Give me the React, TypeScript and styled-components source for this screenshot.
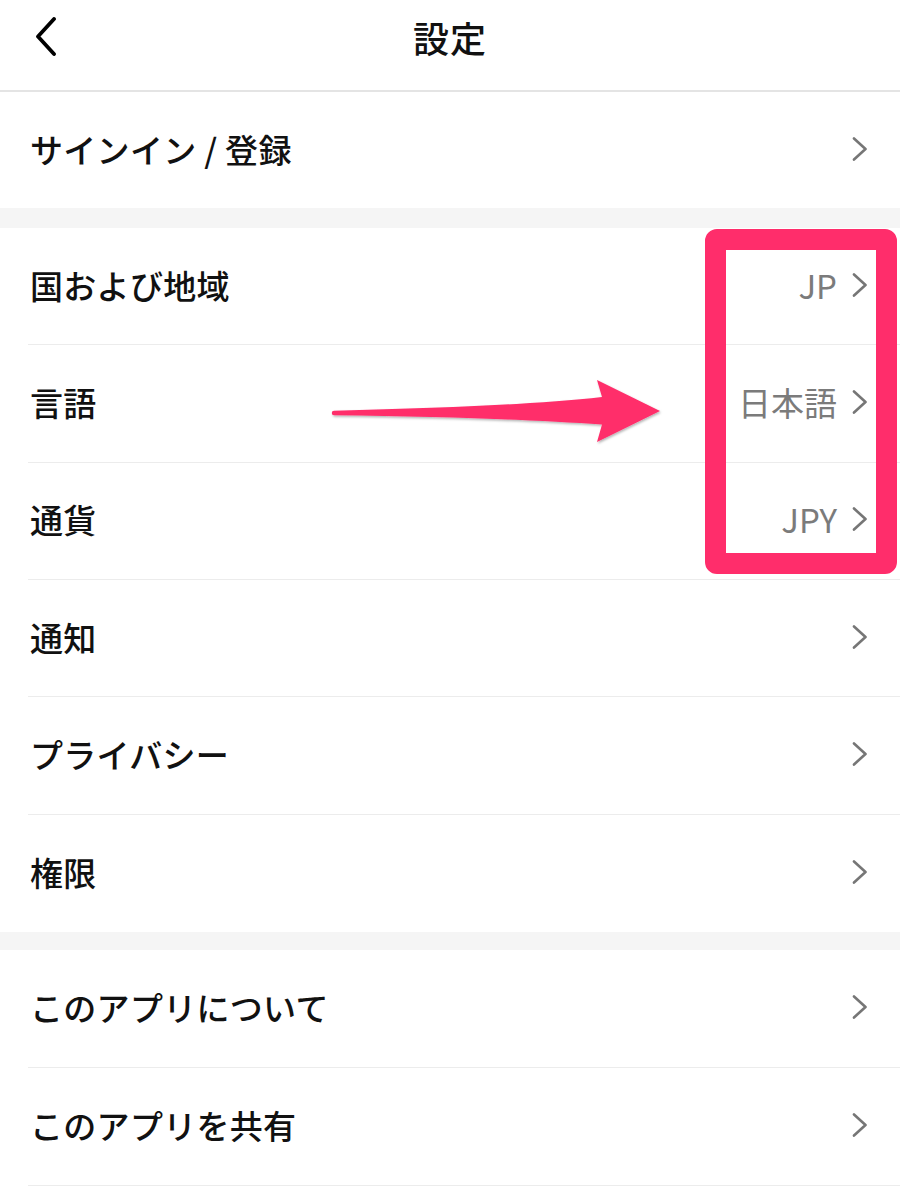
import React from 'react'
import styled, {createGlobalStyle} from 'styled-components'

const colors = {
  pink: '#FF2D6B',
  text: '#111111',
  value: '#7b7b7b',
  chevron: '#767676',
  divider: '#ececec',
  gap: '#f5f5f5',
}

const GlobalStyle = createGlobalStyle`
  html, body {
    margin: 0;
    padding: 0;
    background: #ffffff;
  }
  body {
    font-family: "Noto Sans CJK JP", "Noto Sans", sans-serif;
    color: ${colors.text};
  }
`

const Page = styled.div`
  position: relative;
  width: 900px;
  min-height: 1187px;
  background: #ffffff;
  overflow: hidden;
`

const Header = styled.header`
  display: grid;
  grid-template-columns: 1fr auto 1fr;
  align-items: center;
  height: 92px;
  box-sizing: border-box;
  border-bottom: 2px solid #e4e4e4;
`

const BackButton = styled.button`
  justify-self: start;
  display: flex;
  align-items: center;
  margin: 0 0 16px 34px;
  padding: 0;
  border: none;
  background: none;
`

const Title = styled.h1`
  margin: 0 0 16px;
  font-size: 36px;
  font-weight: 500;
  letter-spacing: 1px;
`

const Section = styled.section`
  display: flex;
  flex-direction: column;
`

const Gap = styled.div<{$h: number}>`
  height: ${_ => _.$h}px;
  background: ${colors.gap};
`

const Row = styled.div<{$h: number; $line: boolean}>`
  display: flex;
  align-items: center;
  height: ${_ => _.$h}px;
  box-sizing: border-box;
  margin-left: 28px;
  padding: 0 32px 3px 2px;
  border-bottom: ${_ => (_.$line ? `1.5px solid ${colors.divider}` : 'none')};
`

const Label = styled.span`
  flex: 1;
  font-size: 33px;
  font-weight: 500;
  letter-spacing: 0.3px;
`

const Value = styled.span`
  margin-right: 15px;
  font-size: 33px;
  font-weight: 400;
  color: ${colors.value};
`

const Highlight = styled.div`
  position: absolute;
  left: 705px;
  top: 229px;
  width: 192px;
  height: 345px;
  box-sizing: border-box;
  border: 21px solid ${colors.pink};
  border-radius: 12px;
  pointer-events: none;
`

const ArrowSvg = styled.svg`
  position: absolute;
  left: 0;
  top: 0;
  pointer-events: none;
  overflow: visible;
`

const Chevron = () => (
  <svg width="16" height="24" viewBox="0 0 16 24">
    <path d="M2 1.5 L13.5 12 L2 22.5" fill="none" stroke={colors.chevron} strokeWidth="2.6" strokeLinecap="round" strokeLinejoin="round" />
  </svg>
)

const BackIcon = () => (
  <svg width="24" height="40" viewBox="0 0 24 40">
    <path d="M20 2 L4 19.5 L20 37" fill="none" stroke="#000" strokeWidth="3.8" strokeLinecap="round" strokeLinejoin="round" />
  </svg>
)

const SettingRow = ({label, value, h, line}: {label: string; value?: string; h: number; line: boolean}) => (
  <Row $h={h} $line={line}>
    <Label>{label}</Label>
    {value && <Value>{value}</Value>}
    <Chevron />
  </Row>
)

const region = [
  {label: '国および地域', value: 'JP'},
  {label: '言語', value: '日本語'},
  {label: '通貨', value: 'JPY'},
  {label: '通知'},
  {label: 'プライバシー'},
  {label: '権限'},
]

const about = [{label: 'このアプリについて'}, {label: 'このアプリを共有'}]

export default function App() {
  return (
    <Page>
      <GlobalStyle />
      <Header>
        <BackButton aria-label="戻る">
          <BackIcon />
        </BackButton>
        <Title>設定</Title>
        <span />
      </Header>

      <Section>
        <SettingRow label="サインイン / 登録" h={116} line={false} />
      </Section>
      <Gap $h={20} />

      <Section>
        {region.map((r, i) => (
          <SettingRow key={r.label} label={r.label} value={r.value} h={117.33} line={i < region.length - 1} />
        ))}
      </Section>
      <Gap $h={18} />

      <Section>
        {about.map(r => (
          <SettingRow key={r.label} label={r.label} h={118} line={true} />
        ))}
      </Section>

      <Highlight />
      <ArrowSvg width="900" height="1187" viewBox="0 0 900 1187">
        <defs>
          <filter id="arrowShadow" x="-10%" y="-50%" width="120%" height="200%">
            <feDropShadow dx="1" dy="1.5" stdDeviation="1.2" floodColor="#000" floodOpacity="0.3" />
          </filter>
        </defs>
        <path
          d="M334 410.8 C450 408 540 404 602 397 L597 380 L660 411 L597 442 L602 424.5 C540 420 450 416.5 334 415.2 A2.2 2.2 0 0 1 334 410.8 Z"
          fill={colors.pink}
          filter="url(#arrowShadow)"
        />
      </ArrowSvg>
    </Page>
  )
}
